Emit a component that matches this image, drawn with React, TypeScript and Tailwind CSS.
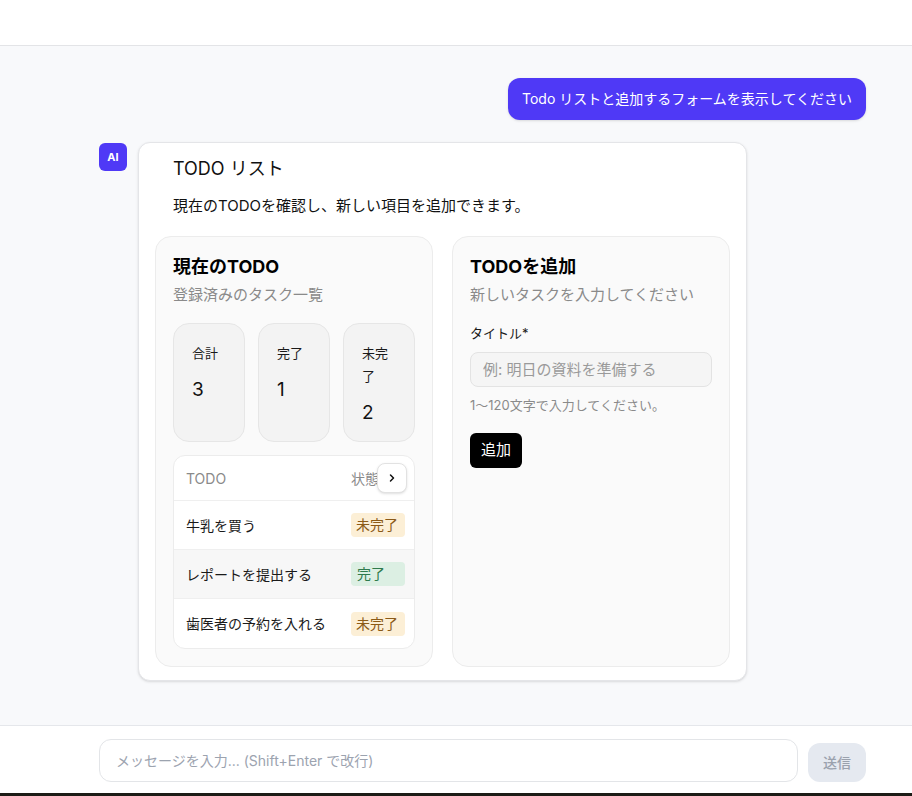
import React from 'react';

const todos = [
  { title: '牛乳を買う', done: false },
  { title: 'レポートを提出する', done: true },
  { title: '歯医者の予約を入れる', done: false },
];

function StatCard({ label, value }: { label: string; value: number }) {
  return (
    <div className="rounded-2xl border border-[#e6e6e6] bg-[#f3f3f3] px-[18px] pt-[18px] pb-[15px]">
      <div className="text-[13px] leading-[23px] text-[#1a1a1a]">{label}</div>
      <div className="mt-[12px] text-[19px] leading-[26px] text-[#111]">{value}</div>
    </div>
  );
}

function StatusBadge({ done }: { done: boolean }) {
  return done ? (
    <span className="w-[54px] whitespace-nowrap rounded-[4px] bg-[#dcefe3] px-[6px] text-[14px] leading-[24px] text-[#2f7a4c]">
      完了
    </span>
  ) : (
    <span className="w-[54px] whitespace-nowrap rounded-[4px] bg-[#fcefd6] px-[5px] text-[14px] leading-[24px] text-[#8b5a17]">
      未完了
    </span>
  );
}

function TodoListPanel() {
  const doneCount = todos.filter(t => t.done).length;
  return (
    <div className="rounded-2xl border border-[#ececec] bg-[#fafafa] px-[17px] pt-[17px] pb-[17px]">
      <h3 className="text-[18px] font-bold leading-[26px] text-black">現在のTODO</h3>
      <p className="mt-[4px] text-[15px] leading-[22px] text-[#8a8a8a]">登録済みのタスク一覧</p>

      <div className="mt-[17px] grid grid-cols-3 gap-[13px]">
        <StatCard label="合計" value={todos.length} />
        <StatCard label="完了" value={doneCount} />
        <StatCard label="未完了" value={todos.length - doneCount} />
      </div>

      <div className="relative mt-[13px] overflow-hidden rounded-xl border border-[#ececec] bg-white">
        <div className="flex h-[45px] items-center justify-between border-b border-[#efefef] pl-[12px] pr-[9px] text-[14px] text-[#8a8a8a]">
          <span>TODO</span>
          <span className="w-[54px] whitespace-nowrap">状態</span>
        </div>
        {todos.map((todo, i) => (
          <div
            key={todo.title}
            className={`flex h-[49px] items-center justify-between pl-[12px] pr-[9px] text-[14px] text-[#1a1a1a] ${
              i < todos.length - 1 ? 'border-b border-[#efefef]' : ''
            } ${i === 1 ? 'bg-[#f7f7f7]' : ''}`}
          >
            <span>{todo.title}</span>
            <StatusBadge done={todo.done} />
          </div>
        ))}
        <button className="absolute right-[7px] top-[7px] flex h-[30px] w-[30px] items-center justify-center rounded-lg border border-[#e2e2e2] bg-white shadow-sm">
          <svg width="12" height="12" viewBox="0 0 24 24" fill="none" stroke="#111" strokeWidth="3" strokeLinecap="round" strokeLinejoin="round">
            <path d="m9 18 6-6-6-6" />
          </svg>
        </button>
      </div>
    </div>
  );
}

function AddTodoPanel() {
  return (
    <div className="rounded-2xl border border-[#ececec] bg-[#fafafa] px-[17px] pt-[17px] pb-[17px]">
      <h3 className="text-[18px] font-bold leading-[26px] text-black">TODOを追加</h3>
      <p className="mt-[4px] text-[15px] leading-[22px] text-[#8a8a8a]">新しいタスクを入力してください</p>

      <label className="mt-[17px] block text-[13px] leading-[20px] text-[#1a1a1a]">タイトル*</label>
      <input
        className="mt-[9px] h-[35px] w-full rounded-lg border border-[#e3e3e3] bg-[#f5f5f5] px-[12px] text-[15px] outline-none placeholder:text-[#9a9a9a]"
        placeholder="例: 明日の資料を準備する"
      />
      <p className="mt-[8px] text-[13px] leading-[20px] text-[#8a8a8a]">1〜120文字で入力してください。</p>

      <button className="mt-[18px] h-[35px] rounded-md bg-black px-[11px] text-[15px] text-white">追加</button>
    </div>
  );
}

export default function App() {
  return (
    <div
      className="flex h-[796px] flex-col overflow-hidden bg-[#f8f9fb]"
      style={{ fontFamily: 'Inter, "Noto Sans CJK JP", "Noto Sans", sans-serif' }}
    >
      <header className="h-[46px] shrink-0 border-b border-[#e3e4e7] bg-white" />

      <main className="flex-1 pl-[99px] pr-[46px] pt-[32px]">
        <div className="flex justify-end">
          <div className="rounded-xl bg-[#4f39f6] px-[14px] py-[11px] text-[14px] leading-[20px] text-white shadow-sm">
            Todo リストと追加するフォームを表示してください
          </div>
        </div>

        <div className="mt-[22px] flex items-start gap-[11px]">
          <div className="mt-[1px] flex h-[28px] w-[28px] shrink-0 items-center justify-center rounded-md bg-[#4f39f6] text-[11px] font-bold text-white">
            AI
          </div>
          <div className="w-[609px] rounded-xl border border-[#e4e5e8] bg-white px-[16px] pt-[13px] pb-[13px] shadow-sm">
            <div className="px-[18px]">
              <h2 className="text-[18px] leading-[26px] text-[#111]">TODO リスト</h2>
              <p className="mt-[12px] text-[15px] leading-[24px] text-[#111]">現在のTODOを確認し、新しい項目を追加できます。</p>
            </div>
            <div className="mt-[18px] grid grid-cols-2 gap-[19px]">
              <TodoListPanel />
              <AddTodoPanel />
            </div>
          </div>
        </div>
      </main>

      <footer className="flex h-[68px] shrink-0 items-end gap-[10px] border-t border-[#e5e7eb] bg-white pl-[99px] pr-[46px] pb-[11px]">
        <input
          className="h-[43px] flex-1 rounded-xl border border-[#e3e5e8] bg-white px-[16px] text-[14px] outline-none placeholder:text-[#9ca3af]"
          placeholder="メッセージを入力... (Shift+Enter で改行)"
        />
        <button className="h-[39px] w-[58px] rounded-xl bg-[#e5e9f0] text-[14px] font-medium text-[#9aa1ad]">送信</button>
      </footer>
      <div className="h-[3px] shrink-0 bg-[#1c1c16]" />
    </div>
  );
}
